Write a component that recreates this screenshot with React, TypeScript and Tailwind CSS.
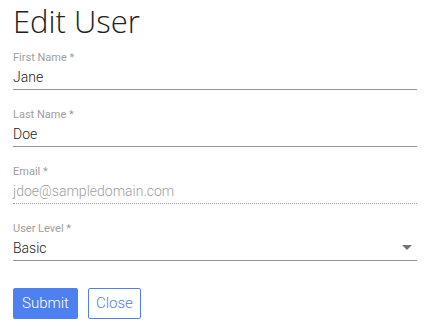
import { useState } from "react";

const font = { fontFamily: "Roboto, 'Liberation Sans', sans-serif" };

function Field({ label, value, disabled }: { label: string; value: string; disabled?: boolean }) {
  return (
    <div className="flex flex-col">
      <label className="text-[11px] leading-[13px] text-[#9e9e9e]">{label}</label>
      <div
        className={
          "mt-[3px] h-[23px] text-[14px] leading-[20px] font-light " +
          (disabled
            ? "border-b border-dotted border-[#9e9e9e] text-[#9e9e9e]"
            : "border-b border-[#949494] text-[#212121]")
        }
      >
        {value}
      </div>
    </div>
  );
}

export default function App() {
  const [level] = useState("Basic");
  return (
    <div className="bg-white w-[431px] h-[329px] px-[13px] pt-[1px]" style={font}>
      <h1
        className="text-[31px] leading-[40px] text-[#212121] font-light"
        style={{ fontFamily: "'Open Sans', 'Noto Sans', sans-serif" }}
      >
        Edit User
      </h1>
      <div className="mt-[10px] flex flex-col gap-[18px] w-[404px]">
        <Field label="First Name *" value="Jane" />
        <Field label="Last Name *" value="Doe" />
        <Field label="Email *" value="jdoe@sampledomain.com" disabled />
        <div className="flex flex-col">
          <label className="text-[11px] leading-[13px] text-[#9e9e9e]">User Level *</label>
          <div className="mt-[3px] h-[23px] flex items-start justify-between border-b border-[#949494] text-[14px] leading-[20px] font-light text-[#212121]">
            <span>{level}</span>
            <svg width="10" height="5" viewBox="0 0 10 5" className="mt-[7px] mr-[5px]">
              <path d="M0 0h10L5 5z" fill="#757575" />
            </svg>
          </div>
        </div>
      </div>
      <div className="mt-[27px] flex gap-[10px]">
        <button className="h-[31px] px-[9px] rounded-[2px] bg-[#4f80f0] text-white text-[15px] font-light">
          Submit
        </button>
        <button className="h-[31px] px-[7px] rounded-[2px] border border-[#4f80f0] text-[#4f80f0] bg-white text-[15px] font-light">
          Close
        </button>
      </div>
    </div>
  );
}
